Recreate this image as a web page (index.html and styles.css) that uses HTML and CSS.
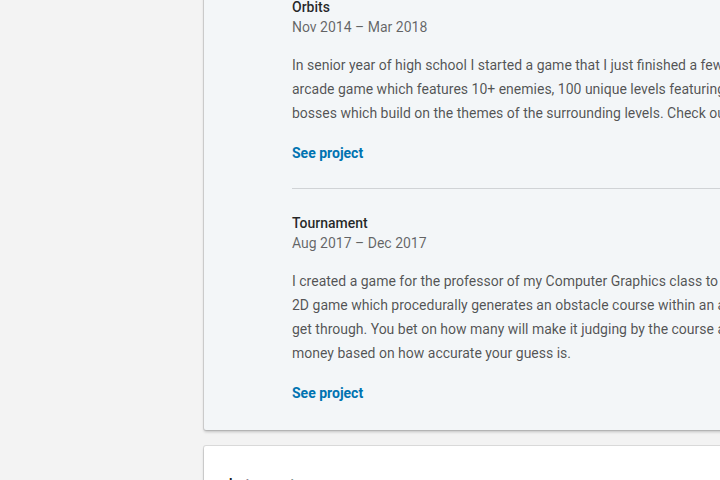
FILE: index.html
```html
<!DOCTYPE html>
<html lang="en">
<head>
<meta charset="utf-8">
<title>Projects</title>
<link rel="stylesheet" href="styles.css">
</head>
<body>
<main class="main">
  <section class="card card--projects">
    <ul class="projects">
      <li class="project">
        <h3 class="project__title">Orbits</h3>
        <p class="project__dates">Nov 2014 – Mar 2018</p>
        <p class="project__desc">In senior year of high school I started a game that I just finished a few weeks ago. It's an<br>arcade game which features 10+ enemies, 100 unique levels featuring 10 different<br>bosses which build on the themes of the surrounding levels. Check out the game below!</p>
        <a class="project__link" href="#">See project</a>
      </li>
      <li class="project">
        <h3 class="project__title">Tournament</h3>
        <p class="project__dates">Aug 2017 – Dec 2017</p>
        <p class="project__desc">I created a game for the professor of my Computer Graphics class to give to students. It's a<br>2D game which procedurally generates an obstacle course within an arena for the players to<br>get through. You bet on how many will make it judging by the course and earn or lose<br>money based on how accurate your guess is.</p>
        <a class="project__link" href="#">See project</a>
      </li>
    </ul>
  </section>
  <section class="card card--interests">
    <h2 class="card__heading">Interests</h2>
  </section>
</main>
</body>
</html>
```
FILE: styles.css
```css
html, body {
  margin: 0;
  padding: 0;
}
body {
  background: #f3f3f3;
  font-family: Roboto, "Liberation Sans", sans-serif;
  overflow: hidden;
  height: 480px;
}
.main {
  padding-left: 204px;
  width: 792px;
}
.card {
  border-radius: 2px;
  box-shadow: 0 0 0 1px rgba(0,0,0,.1), 0 2px 3px rgba(0,0,0,.2);
}
.card--projects {
  background: #f3f6f8;
  margin-top: -27px;
  padding: 24px 0 25px 88px;
}
.projects {
  list-style: none;
  margin: 0;
  padding: 0;
}
.project {
  padding: 0 0 23px;
}
.project + .project {
  border-top: 1px solid #d0d3d6;
  padding: 24px 0 0;
}
.project__title {
  margin: 0;
  font-size: 14px;
  line-height: 20px;
  font-weight: 500;
  color: rgba(0,0,0,.85);
}
.project__dates {
  margin: 0;
  font-size: 14px;
  line-height: 20px;
  color: rgba(0,0,0,.6);
}
.project__desc {
  margin: 16px 0 0;
  font-size: 14px;
  line-height: 24px;
  color: rgba(0,0,0,.68);
  white-space: nowrap;
}
.project__link {
  display: block;
  margin-top: 16px;
  font-size: 14px;
  line-height: 24px;
  font-weight: 700;
  color: #0073b1;
  text-decoration: none;
}
.card--interests {
  background: #fff;
  margin-top: 16px;
  padding: 28px 24px 24px;
  height: 200px;
}
.card__heading {
  margin: 0;
  font-size: 20px;
  line-height: 24px;
  font-weight: 400;
  color: rgba(0,0,0,.9);
}
```
